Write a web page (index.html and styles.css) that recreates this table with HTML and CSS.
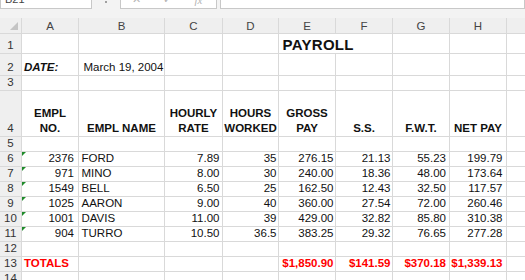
FILE: index.html
```html
<!DOCTYPE html>
<html>
<head>
<meta charset="utf-8">
<link rel="stylesheet" href="styles.css">
</head>
<body>
<div class="toolbar">
  <div class="namebox">B21</div>
  <div class="grip"><i></i></div>
  <div class="fxbox"><span>✕</span><span>✓</span><span class="fx">fx</span></div>
  <div class="formula"></div>
</div>
<div class="sheet">
  <div class="corner"><svg width="21" height="15" viewBox="0 0 21 15"><polygon points="18,4 18,12 10,12" fill="#c4c4c4"/></svg></div>
  <div class="h">A</div><div class="h">B</div><div class="h">C</div><div class="h">D</div><div class="h">E</div><div class="h">F</div><div class="h">G</div><div class="h">H</div><div class="h"></div>

  <div class="r">1</div><div class="c"></div><div class="c"></div><div class="c"></div><div class="c"></div><div class="c title span2">PAYROLL</div><div class="c"></div><div class="c"></div><div class="c"></div>

  <div class="r">2</div><div class="c date">DATE:</div><div class="c march">March 19, 2004</div><div class="c"></div><div class="c"></div><div class="c"></div><div class="c"></div><div class="c"></div><div class="c"></div><div class="c"></div>

  <div class="r">3</div><div class="c"></div><div class="c"></div><div class="c"></div><div class="c"></div><div class="c"></div><div class="c"></div><div class="c"></div><div class="c"></div><div class="c"></div>

  <div class="r">4</div>
  <div class="c th"><span>EMPL</span><span>NO.</span></div>
  <div class="c th"><span>EMPL NAME</span></div>
  <div class="c th"><span>HOURLY</span><span>RATE</span></div>
  <div class="c th"><span>HOURS</span><span>WORKED</span></div>
  <div class="c th"><span>GROSS</span><span>PAY</span></div>
  <div class="c th"><span>S.S.</span></div>
  <div class="c th"><span>F.W.T.</span></div>
  <div class="c th"><span>NET PAY</span></div>
  <div class="c"></div>

  <div class="r">5</div><div class="c"></div><div class="c"></div><div class="c"></div><div class="c"></div><div class="c"></div><div class="c"></div><div class="c"></div><div class="c"></div><div class="c"></div>

  <div class="r">6</div><div class="c n a tri">2376</div><div class="c b">FORD</div><div class="c n cc">7.89</div><div class="c n d">35</div><div class="c n e">276.15</div><div class="c n f">21.13</div><div class="c n g">55.23</div><div class="c n hh">199.79</div><div class="c"></div>
  <div class="r">7</div><div class="c n a tri">971</div><div class="c b">MINO</div><div class="c n cc">8.00</div><div class="c n d">30</div><div class="c n e">240.00</div><div class="c n f">18.36</div><div class="c n g">48.00</div><div class="c n hh">173.64</div><div class="c"></div>
  <div class="r">8</div><div class="c n a tri">1549</div><div class="c b">BELL</div><div class="c n cc">6.50</div><div class="c n d">25</div><div class="c n e">162.50</div><div class="c n f">12.43</div><div class="c n g">32.50</div><div class="c n hh">117.57</div><div class="c"></div>
  <div class="r">9</div><div class="c n a tri">1025</div><div class="c b">AARON</div><div class="c n cc">9.00</div><div class="c n d">40</div><div class="c n e">360.00</div><div class="c n f">27.54</div><div class="c n g">72.00</div><div class="c n hh">260.46</div><div class="c"></div>
  <div class="r">10</div><div class="c n a tri">1001</div><div class="c b">DAVIS</div><div class="c n cc">11.00</div><div class="c n d">39</div><div class="c n e">429.00</div><div class="c n f">32.82</div><div class="c n g">85.80</div><div class="c n hh">310.38</div><div class="c"></div>
  <div class="r">11</div><div class="c n a tri">904</div><div class="c b">TURRO</div><div class="c n cc">10.50</div><div class="c n d">36.5</div><div class="c n e">383.25</div><div class="c n f">29.32</div><div class="c n g">76.65</div><div class="c n hh">277.28</div><div class="c"></div>

  <div class="r">12</div><div class="c"></div><div class="c"></div><div class="c"></div><div class="c"></div><div class="c"></div><div class="c"></div><div class="c"></div><div class="c"></div><div class="c"></div>

  <div class="r">13</div><div class="c red">TOTALS</div><div class="c"></div><div class="c"></div><div class="c"></div><div class="c n e red">$1,850.90</div><div class="c n f red">$141.59</div><div class="c n g red">$370.18</div><div class="c n hh red">$1,339.13</div><div class="c"></div>

  <div class="r">14</div><div class="c"></div><div class="c"></div><div class="c"></div><div class="c"></div><div class="c"></div><div class="c"></div><div class="c"></div><div class="c"></div><div class="c"></div>
</div>
</body>
</html>
```
FILE: styles.css
```css
* { box-sizing: border-box; }
html, body { margin: 0; padding: 0; }
body {
  width: 525px;
  height: 280px;
  overflow: hidden;
  background: #fff;
  font-family: "Liberation Sans", Arial, sans-serif;
}
.toolbar {
  height: 18px;
  background: #f3f3f3;
  display: flex;
  align-items: flex-start;
  overflow: hidden;
}
.namebox {
  width: 92px;
  height: 20px;
  margin-top: -11px;
  background: #fff;
  border: 1px solid #c8c8c8;
  font-size: 11px;
  line-height: 18px;
  padding-left: 4px;
  color: #444;
}
.grip {
  width: 28px;
  display: flex;
  justify-content: center;
}
.grip i {
  display: block;
  width: 2px;
  height: 2px;
  margin-top: 1px;
  background: #a0a0a0;
}
.fxbox {
  width: 97px;
  height: 20px;
  margin-top: -11px;
  background: #fff;
  border: 1px solid #c8c8c8;
  display: flex;
  font-family: "DejaVu Sans", sans-serif;
  font-size: 11px;
  line-height: 18px;
  color: #b4b4b4;
  padding-top: 1px;
}
.fxbox span { width: 31px; text-align: center; }
.fxbox .fx { font-family: "Liberation Serif", serif; font-style: italic; }
.formula {
  flex: 1;
  height: 20px;
  margin-top: -11px;
  margin-left: 3px;
  background: #fff;
  border: 1px solid #c8c8c8;
}
.sheet {
  display: grid;
  grid-template-columns: 21px 56px 85px 57px 55px 56px 56px 56px 56px minmax(0, 1fr);
  grid-template-rows: 15px 19px 21px 14px 45px 14px repeat(9, 14px);
  gap: 1px;
  background: #d9d9d9;
  font-size: 11.5px;
  color: #111;
}
.corner { background: #efefef; }
.corner svg { display: block; }
.h {
  background: #efefef;
  display: flex;
  align-items: center;
  justify-content: center;
  color: #444;
  font-size: 11.5px;
}
.r {
  background: #efefef;
  display: flex;
  align-items: flex-end;
  justify-content: center;
  color: #333;
  font-size: 11.5px;
  line-height: 13px;
  padding-bottom: 1px;
}
.c {
  background: #fff;
  display: flex;
  align-items: flex-end;
  line-height: 13px;
  padding: 0 2px 1px 2px;
  white-space: nowrap;
  position: relative;
}
.n { justify-content: flex-end; }
.a { padding-right: 4px; }
.b { padding-left: 2.5px; }
.cc { padding-right: 2.5px; }
.d { padding-right: 1.5px; }
.e { padding-right: 1.5px; }
.f { padding-right: 1.5px; }
.g { padding-right: 3px; }
.hh { padding-right: 3.5px; }
.span2 { grid-column: span 2; }
.title {
  font-size: 15px;
  font-weight: bold;
  letter-spacing: 0.3px;
  padding-left: 3.5px;
  line-height: 16px;
  padding-bottom: 0;
}
.date { font-weight: bold; font-style: italic; padding-left: 2px; }
.march { padding-left: 4.5px; }
.th {
  flex-direction: column;
  justify-content: flex-end;
  align-items: center;
  font-weight: bold;
  line-height: 15px;
  padding-bottom: 0;
}
.red { color: #ff0000; font-weight: bold; }
.tri::before {
  content: "";
  position: absolute;
  left: 0;
  top: 0;
  border-top: 4px solid #1f8a2a;
  border-right: 4px solid transparent;
}
```
